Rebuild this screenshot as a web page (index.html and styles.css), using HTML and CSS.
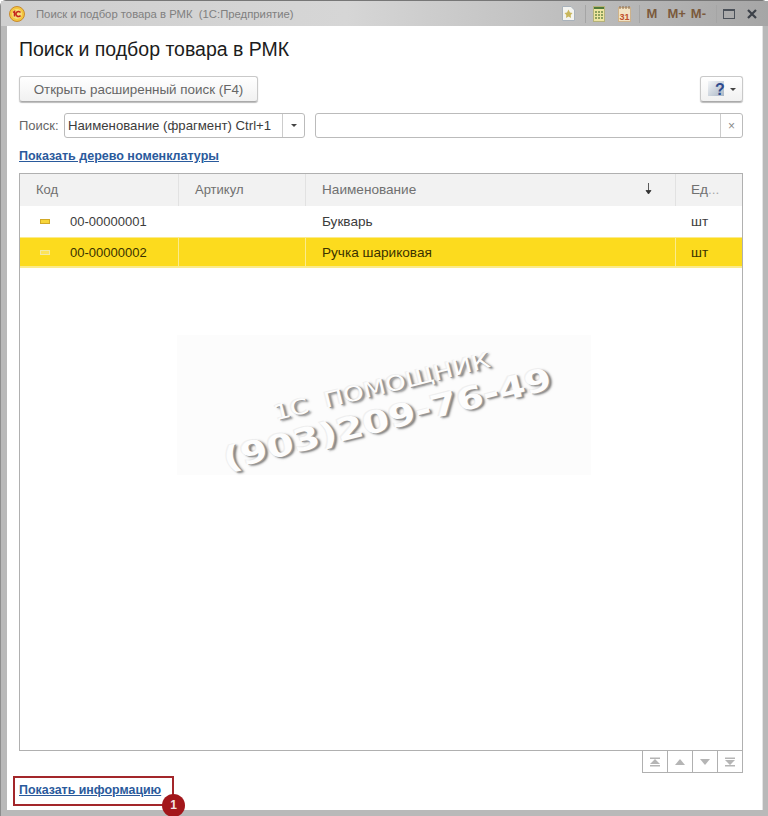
FILE: index.html
```html
<!DOCTYPE html>
<html lang="ru">
<head>
    <meta charset="UTF-8">
    <title>Поиск и подбор товара в РМК</title>
    <link rel="stylesheet" href="styles.css">
</head>
<body>
<div class="window">
    <div class="titlebar">
        <svg class="logo" width="16" height="16" viewBox="0 0 16 16">
            <circle cx="8" cy="8" r="7.5" fill="#f3c63f" stroke="#c98a2e"/>
            <circle cx="8" cy="8" r="5" fill="#f7dd7a"/>
            <path d="M4 6.500 5.500 5.500V10.500M11.500 6.500A2.500 2.500 0 1 0 11.500 9.500" fill="none" stroke="#c4261d" stroke-width="1.500"/>
        </svg>
        <span class="title-text">Поиск и подбор товара в РМК&nbsp; (1С:Предприятие)</span>
        <div class="tools">
            <svg class="tool-fav" width="13" height="15" viewBox="0 0 13 15">
                <path d="M.5.500H9L12.500 4V14.500H.5Z" fill="#f4f4f0" stroke="#a9b2bb"/>
                <path d="M6.500 3.500 8 6.500 10.500 7 8.700 9 9 12 6.500 10.500 4 12 4.300 9 2.500 7 5 6.500Z" fill="#c9b75c"/>
            </svg>
            <span class="sep sep-fav"></span>
            <svg class="tool-calc" width="12" height="16" viewBox="0 0 12 16">
                <rect x=".5" y=".5" width="11" height="15" fill="#eee5a0" stroke="#b5b27a"/>
                <rect x="1" y="1" width="10" height="2" fill="#4f7a3a"/>
                <path d="M3 5V14M6 5V14M9 5V14" stroke="#6d8a4a" stroke-width="1.500" stroke-dasharray="2 1"/>
            </svg>
            <svg class="tool-date" width="13" height="17" viewBox="0 0 13 17">
                <rect x=".5" y="2.500" width="12" height="14" fill="#f3e3c4" stroke="#cdb28c"/>
                <path d="M2 1V4M5 1V4M8 1V4M11 1V4" stroke="#8c6a4a"/>
                <text x="6.500" y="14.500" class="date-num" text-anchor="middle">31</text>
            </svg>
            <span class="sep sep-date"></span>
            <span class="mem mem-m">M</span>
            <span class="mem mem-plus">M+</span>
            <span class="mem mem-minus">M-</span>
            <span class="sep sep-mem"></span>
            <span class="maximize"></span>
            <svg class="close" width="10" height="10" viewBox="0 0 10 10">
                <path d="M1 1 9 9M9 1 1 9" stroke="#3c4148" stroke-width="2.200"/>
            </svg>
        </div>
    </div>

    <div class="content">
        <h1 class="form-title">Поиск и подбор товара в РМК</h1>

        <div class="command-row">
            <button class="btn btn-search">Открыть расширенный поиск (F4)</button>
            <button class="btn btn-help">
                <svg width="20" height="18" viewBox="0 0 20 18">
                    <defs>
                        <linearGradient id="helpbg" x1="0" y1="0" x2="1" y2="1">
                            <stop offset="0" stop-color="#f4f6f8"/>
                            <stop offset="1" stop-color="#a9b6c6"/>
                        </linearGradient>
                    </defs>
                    <rect x="0" y="1" width="16" height="15" fill="url(#helpbg)"/>
                    <text x="12" y="15" class="help-mark" text-anchor="middle">?</text>
                </svg>
                <span class="caret"></span>
            </button>
        </div>

        <div class="search-row">
            <label class="search-label">Поиск:</label>
            <div class="field field-mode">
                <span class="field-value">Наименование (фрагмент) Ctrl+1</span>
                <span class="field-btn"><span class="caret"></span></span>
            </div>
            <div class="field field-query">
                <span class="field-value"></span>
                <span class="field-btn field-clear">×</span>
            </div>
        </div>

        <a class="link link-tree" href="#">Показать дерево номенклатуры</a>

        <div class="table">
            <div class="row head">
                <div class="cell col-code">Код</div>
                <div class="cell col-art">Артикул</div>
                <div class="cell col-name">Наименование
                    <svg class="sort" width="7" height="12" viewBox="0 0 7 12"><path d="M3.500 0V10M1 7.500 3.500 11 6 7.500Z" fill="#333" stroke="#333" stroke-width=".8"/></svg>
                </div>
                <div class="cell col-unit">Ед<span class="dots">...</span></div>
            </div>
            <div class="row">
                <div class="cell col-code"><span class="item-mark"></span>00-00000001</div>
                <div class="cell col-art"></div>
                <div class="cell col-name">Букварь</div>
                <div class="cell col-unit">шт</div>
            </div>
            <div class="row selected">
                <div class="cell col-code"><span class="item-mark"></span>00-00000002</div>
                <div class="cell col-art"></div>
                <div class="cell col-name">Ручка шариковая</div>
                <div class="cell col-unit">шт</div>
            </div>
        </div>

        <div class="nav-row">
            <div class="nav-btn">
                <svg width="14" height="10" viewBox="0 0 14 10"><path d="M2 .5H12V2H2ZM7 2 12 7H2ZM2 8H12V9.500H2Z" fill="#b5b5b5"/></svg>
            </div>
            <div class="nav-btn">
                <svg width="14" height="10" viewBox="0 0 14 10"><path d="M7 2 12 8H2Z" fill="#b5b5b5"/></svg>
            </div>
            <div class="nav-btn">
                <svg width="14" height="10" viewBox="0 0 14 10"><path d="M2 2H12L7 8Z" fill="#b5b5b5"/></svg>
            </div>
            <div class="nav-btn">
                <svg width="14" height="10" viewBox="0 0 14 10"><path d="M2 .5H12V2H2ZM2 3H12L7 8ZM2 8H12V9.500H2Z" fill="#b5b5b5"/></svg>
            </div>
        </div>

        <div class="footer-row">
            <a class="link link-info" href="#">Показать информацию</a>
        </div>
    </div>

    <div class="watermark">
        <div class="wm-text">
            <div class="wm-line wm-top">1С&nbsp; помощник</div>
            <div class="wm-line wm-phone">(903)209-76-49</div>
        </div>
    </div>

    <div class="callout"></div>
    <div class="badge">1</div>
</div>
</body>
</html>
```

FILE: styles.css
```css
html, body {
    margin: 0;
    padding: 0;
    height: 816px;
    overflow: hidden;
    background: #fff;
}

body {
    font-family: "Liberation Sans", Arial, sans-serif;
    font-size: 14px;
    color: #3c3c3c;
}

.window {
    position: relative;
    width: 768px;
    height: 816px;
    box-sizing: border-box;
    padding: 0 5px 6px 6px;
    background: #b9b9b9;
    display: flex;
    flex-direction: column;
    border-left: 1px solid #8d8d8d;
    border-top: 1px solid #777;
    border-radius: 6px 6px 0 0;
}

.titlebar {
    height: 25px;
    flex: none;
    display: flex;
    align-items: center;
    background: linear-gradient(to right, #cfcfcf 0%, #d6d6d6 45%, #bdbdbd 75%, #a6a6a6 100%);
    margin: 0 -5px 0 -6px;
    padding: 0 11px 0 8px;
}

.logo {
    flex: none;
}

.title-text {
    margin-left: 11px;
    font-size: 11.3px;
    color: #808080;
}

.tools {
    margin-left: auto;
    display: flex;
    align-items: center;
    height: 25px;
}

.tool-fav { margin-right: 10px; }
.tool-calc { margin-left: 7px; }
.tool-date { margin-left: 13px; }

.sep {
    width: 1px;
    height: 18px;
    background: #a5a5a5;
}

.sep-date { margin-left: 8px; }
.sep-mem { margin-left: 10px; }

.date-num {
    font-size: 9px;
    font-weight: bold;
    fill: #c0502c;
    font-family: "Liberation Sans", sans-serif;
}

.mem {
    font-size: 13px;
    font-weight: bold;
    color: #7b5a3c;
}

.mem-m { margin-left: 7px; }
.mem-plus { margin-left: 10px; }
.mem-minus { margin-left: 5px; }

.maximize {
    width: 10px;
    height: 7px;
    margin-left: 6px;
    border: 1px solid #4a5058;
    border-top-width: 2px;
}

.close {
    margin-left: 12px;
}

.content {
    flex: 1;
    min-height: 0;
    background: #fff;
    padding: 0 20px 0 12px;
    display: flex;
    flex-direction: column;
    box-shadow: inset -1px 0 0 #e4e4e4;
}

.form-title {
    margin: 11px 0 1px;
    font-size: 19.5px;
    font-weight: normal;
    line-height: 24px;
    color: #1c1c1c;
}

.command-row {
    margin-top: 14px;
    height: 26px;
    display: flex;
    justify-content: space-between;
}

.btn {
    box-sizing: border-box;
    height: 26px;
    border: 1px solid #c9c9c9;
    border-bottom-color: #aaa;
    border-radius: 3px;
    background: linear-gradient(#fff, #f1f1f1);
    box-shadow: 0 1px 1px #bbb;
    font-family: inherit;
    color: #666;
    padding: 0;
}

.btn-search {
    width: 239px;
    font-size: 13.4px;
}

.btn-help {
    width: 43px;
    display: flex;
    align-items: center;
    padding-left: 7px;
}

.help-mark {
    font-size: 16px;
    font-weight: bold;
    fill: #2f4b8f;
    font-family: "Liberation Sans", sans-serif;
}

.caret {
    display: inline-block;
    width: 0;
    height: 0;
    border-left: 3px solid transparent;
    border-right: 3px solid transparent;
    border-top: 3px solid #444;
}

.btn-help .caret {
    margin-left: 2px;
}

.search-row {
    margin-top: 11px;
    height: 25px;
    display: flex;
    align-items: center;
}

.search-label {
    width: 45px;
    font-size: 13px;
    color: #666;
}

.field {
    box-sizing: border-box;
    height: 25px;
    border: 1px solid #bbb;
    border-radius: 3px;
    background: #fff;
    display: flex;
    align-items: center;
}

.field-mode {
    width: 241px;
}

.field-query {
    flex: 1;
    margin-left: 10px;
}

.field-value {
    flex: 1;
    padding-left: 3px;
    font-size: 13.2px;
    white-space: nowrap;
}

.field-btn {
    width: 21px;
    height: 100%;
    border-left: 1px solid #ccc;
    display: flex;
    align-items: center;
    justify-content: center;
    flex: none;
}

.field-clear {
    font-size: 12px;
    color: #8a8a8a;
}

.link {
    font-size: 12.5px;
    font-weight: bold;
    color: #2a5a9c;
}

.link-tree {
    margin-top: 11px;
    line-height: 14px;
}

.table {
    box-sizing: border-box;
    margin-top: 10px;
    height: 578px;
    flex: none;
    border: 1px solid #b0b0b0;
    background: #fff;
}

.row {
    display: flex;
    height: 30px;
    align-items: stretch;
    border-bottom: 1px solid #fff;
}

.row.head {
    height: 32px;
    background: #f2f2f2;
    border-bottom: 0;
    color: #707070;
}

.row.head .cell {
    padding-bottom: 2px;
}

.row.selected {
    background: #fcdb1e;
    border-top: 1px solid #fbeb8c;
    border-bottom: 2px solid #fbeb8c;
    height: 28px;
    color: #3a3200;
}

.cell {
    box-sizing: border-box;
    display: flex;
    align-items: center;
    font-size: 13.6px;
    white-space: nowrap;
    border-right: 1px solid #e2e2e2;
}

.selected .cell {
    border-right-color: #fbeb8c;
}

.row:not(.head):not(.selected) .cell {
    border-right: 0;
}

.col-code {
    width: 159px;
    padding-left: 16px;
    font-size: 13px;
}

.col-art {
    width: 127px;
    padding-left: 16px;
    font-size: 13px;
}

.col-name {
    width: 370px;
    padding-left: 16px;
    justify-content: space-between;
    padding-right: 23px;
}

.col-unit {
    flex: 1;
    padding-left: 15px;
    border-right: 0;
}

.dots {
    color: #aaa;
}

.item-mark {
    box-sizing: border-box;
    width: 10px;
    height: 5px;
    margin: 0 20px 0 4px;
    background: #f5e28a;
    border: 1px solid #d2a928;
}

.selected .item-mark {
    border-color: #f2e9a6;
    background: #fce35a;
}

.row:not(.head):not(.selected) .item-mark {
    background: #f7d53a;
}

.nav-row {
    display: flex;
    justify-content: flex-end;
    height: 22px;
    flex: none;
}

.nav-btn {
    box-sizing: border-box;
    width: 26px;
    height: 22px;
    margin-left: -1px;
    border: 1px solid #b0b0b0;
    border-top: 0;
    display: flex;
    align-items: center;
    justify-content: center;
}

.footer-row {
    margin-top: 10px;
}

.link-info {
    line-height: 14px;
    display: block;
    font-size: 12.4px;
}

.watermark {
    position: absolute;
    left: 176px;
    top: 334px;
    width: 414px;
    height: 140px;
    background: #fcfcfc;
    display: flex;
    align-items: center;
    justify-content: center;
}

.wm-text {
    transform: rotate(-14deg) scaleX(1.25);
    text-align: center;
    color: #fdfdfd;
    font-family: "DejaVu Sans", sans-serif;
    font-weight: bold;
    text-shadow: 1px 1px 0 #9a9a9a, 2px 2px 2px #777, -1px -1px 0 #f0f0f0;
}

.wm-line {
    white-space: nowrap;
}

.wm-top {
    font-size: 21px;
    line-height: 28px;
    font-weight: normal;
    text-transform: uppercase;
    padding-left: 4px;
}

.wm-phone {
    font-size: 31px;
    line-height: 36px;
}

.callout {
    position: absolute;
    left: 12px;
    top: 775px;
    width: 157px;
    height: 26px;
    border: 2px solid #a3262a;
    pointer-events: none;
}

.badge {
    position: absolute;
    left: 161px;
    top: 793px;
    width: 23px;
    height: 23px;
    border-radius: 50%;
    background: #a3171b;
    color: #f3e2e2;
    font-size: 12px;
    font-weight: bold;
    line-height: 23px;
    text-align: center;
}
```
